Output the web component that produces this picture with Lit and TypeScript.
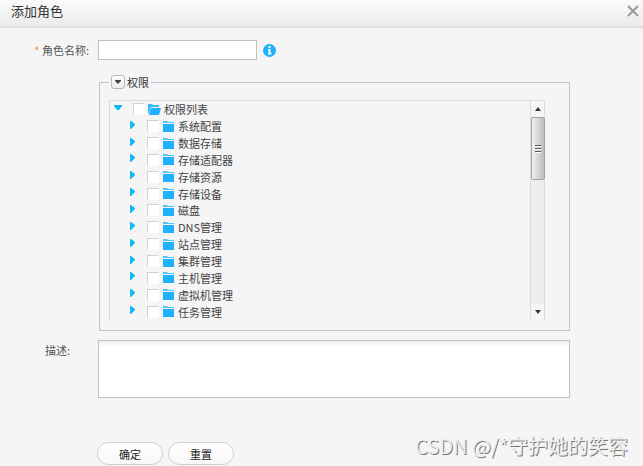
import { LitElement, html, css, svg } from "lit";
import { customElement, state } from "lit/decorators.js";

const PERMISSIONS = [
  "系统配置",
  "数据存储",
  "存储适配器",
  "存储资源",
  "存储设备",
  "磁盘",
  "DNS管理",
  "站点管理",
  "集群管理",
  "主机管理",
  "虚拟机管理",
  "任务管理",
];

const closedFolder = svg`<path d="M0 0h4l1 1h6v1H0z" fill="#4fc4fb"/><path d="M0 3h11v8H0z" fill="#1fb1fb"/>`;
const openFolder = svg`<path d="M0 0h4l1 1h6v2H3L1 10 0 9z" fill="#35bcfb"/><path d="M3 4h10l-2 7H1z" fill="#1fb1fb"/>`;

@customElement("app-root")
export class AppRoot extends LitElement {
  @state() private expanded = true;
  @state() private shown = true;

  static styles = css`
    :host {
      display: block;
      position: relative;
      min-height: 100vh;
      box-sizing: border-box;
      background: #f5f5f5;
      color: #444;
      font: 11px/16px "Noto Sans CJK SC", sans-serif;
    }
    * {
      box-sizing: border-box;
    }
    button,
    input,
    textarea {
      font: inherit;
      color: inherit;
      margin: 0;
      padding: 0;
    }
    button {
      border: 0;
      background: none;
      cursor: pointer;
    }
    svg {
      display: block;
    }
    header {
      display: flex;
      justify-content: space-between;
      height: 28px;
      padding: 2px 4px 0 11px;
      background: linear-gradient(#fafafa, #ebebeb);
      border-bottom: 2px solid #dedede;
    }
    h1 {
      margin: 0;
      font-size: 13px;
      line-height: 18px;
      font-weight: 400;
      color: #333;
    }
    .close {
      height: 18px;
    }
    form {
      display: grid;
      grid-template-columns: 89px minmax(0, 1fr);
      column-gap: 9px;
      padding: 12px 73px 0 0;
    }
    .label {
      text-align: right;
      color: #555;
      line-height: 20px;
    }
    .star {
      color: #ff7f27;
    }
    .label.desc {
      padding-right: 19px;
    }
    .line {
      display: flex;
      align-items: center;
      gap: 6px;
    }
    .name {
      width: 159px;
      height: 20px;
      padding: 0 4px;
      border: 1px solid #c0c0c6;
      background: #fff;
    }
    fieldset {
      grid-column: 2;
      min-width: 0;
      margin: 14px 0 9px 1px;
      padding: 10px 24px 10px 9px;
      border: 1px solid #c0c0d0;
    }
    legend {
      display: flex;
      align-items: center;
      gap: 2px;
      padding: 0 2px;
      color: #333;
    }
    .fold {
      display: grid;
      place-items: center;
      width: 14px;
      height: 14px;
      border: 1px solid #b8b8b8;
      border-radius: 3px;
      background: linear-gradient(#fff, #ececec);
    }
    .panel {
      display: flex;
      height: 220px;
      border: 1px solid #dcdcdc;
      border-bottom: 0;
    }
    .tree {
      flex: 1;
      display: grid;
      grid-template-rows: repeat(13, 1fr);
      margin: 0;
      padding: 0;
      list-style: none;
      overflow: hidden;
    }
    .row {
      display: flex;
      align-items: center;
      min-height: 0;
      padding-left: 19px;
      line-height: 16px;
    }
    .row.root {
      padding-left: 4px;
    }
    .arrow {
      width: 8px;
      margin: 0 10px 3px 0;
    }
    .row.root .arrow {
      margin-right: 11px;
    }
    .row label {
      display: flex;
      align-items: center;
      gap: 4px;
    }
    .row.root label {
      gap: 3px;
    }
    .check {
      appearance: none;
      width: 12px;
      height: 12px;
      border: 1px solid #fff;
      border-left-color: #d2d2d2;
      border-top-color: #d2d2d2;
      background: #fff;
    }
    .check:checked {
      background: #1fb1fb;
    }
    .scroll {
      display: flex;
      flex-direction: column;
      align-items: center;
      width: 14px;
      background: #eee;
      border-left: 1px solid #dedede;
    }
    .step {
      display: grid;
      place-items: center;
      width: 100%;
      height: 16px;
      background: #f5f5f5;
    }
    .thumb {
      display: grid;
      place-items: center;
      width: 14px;
      height: 63px;
      border: 1px solid #a2a2a2;
      border-radius: 2px;
      background: linear-gradient(90deg, #f2f2f2, #bcbcc0);
    }
    .gap {
      flex: 1;
    }
    textarea {
      display: block;
      width: 100%;
      height: 58px;
      padding: 4px;
      border: 1px solid #c0c0c6;
      background: #fff linear-gradient(#eff0f2, #fff) no-repeat 0 0 / 100% 7px;
      resize: none;
    }
    .actions {
      grid-column: 2;
      display: flex;
      gap: 5px;
      margin: 44px 0 0 -1px;
    }
    .pill {
      width: 66px;
      height: 23px;
      border: 1px solid #d0d0d0;
      border-radius: 12px;
      background: linear-gradient(#fff, #f8f8f8);
      color: #222;
    }
    .mark {
      position: absolute;
      right: 15px;
      bottom: 5px;
      font-size: 20px;
      line-height: 30px;
      font-weight: 400;
      color: #eee;
      text-shadow: 1px 1px 0 #777;
      pointer-events: none;
    }
  `;

  private toggleTree() {
    this.expanded = !this.expanded;
  }

  private togglePanel() {
    this.shown = !this.shown;
  }

  private renderChild(name: string) {
    return html`<li class="row">
      <button type="button" class="arrow" aria-label="展开${name}">
        <svg width="6" height="8"><path d="M1 0h1l4 3v1L2 8H1z" fill="#12b9f2" /></svg>
      </button>
      <label>
        <input class="check" type="checkbox" />
        <svg width="11" height="11">${closedFolder}</svg>
        ${name}
      </label>
    </li>`;
  }

  private renderPanel() {
    return html`<div class="panel">
      <ul class="tree">
        <li class="row root">
          <button type="button" class="arrow" aria-label="折叠" @click=${this.toggleTree}>
            <svg width="8" height="5"><path d="M0 0h8v1L5 5H3L0 1z" fill="#12b9f2" /></svg>
          </button>
          <label>
            <input class="check" type="checkbox" />
            <svg width="13" height="11">${openFolder}</svg>
            权限列表
          </label>
        </li>
        ${this.expanded ? PERMISSIONS.map((name) => this.renderChild(name)) : ""}
      </ul>
      <div class="scroll">
        <button type="button" class="step" aria-label="向上">
          <svg width="6" height="4"><path d="M3 0l3 4H0z" fill="#333" /></svg>
        </button>
        <div class="thumb">
          <svg width="6" height="8">
            <path d="M0 .5h6M0 3.5h6M0 6.5h6" stroke="#555" />
            <path d="M0 1.5h6M0 4.5h6M0 7.5h6" stroke="#fff" />
          </svg>
        </div>
        <div class="gap"></div>
        <button type="button" class="step" aria-label="向下">
          <svg width="6" height="4"><path d="M0 0h6L3 4z" fill="#333" /></svg>
        </button>
      </div>
    </div>`;
  }

  render() {
    return html`
      <header>
        <h1>添加角色</h1>
        <button type="button" class="close" aria-label="关闭">
          <svg width="12" height="12">
            <path d="M1 1l10 10M11 1l-10 10" stroke="#999" stroke-width="2" />
          </svg>
        </button>
      </header>
      <form>
        <label class="label" for="role"><span class="star">*</span> 角色名称:</label>
        <div class="line">
          <input id="role" class="name" type="text" />
          <svg width="13" height="13" viewBox="0 0 13 13">
            <circle cx="6.5" cy="6.5" r="6.5" fill="#1fb1fb" />
            <path d="M5.5 2h2v2h-2zM5 5h2.5v4H8.500v1.500H5V9h.5V6.500H5z" fill="#fff" />
          </svg>
        </div>
        <fieldset>
          <legend>
            <button type="button" class="fold" aria-label="收起" @click=${this.togglePanel}>
              <svg width="6" height="4"><path d="M0 0h6v1L3 4 0 1z" fill="#444" /></svg>
            </button>
            权限
          </legend>
          ${this.shown ? this.renderPanel() : ""}
        </fieldset>
        <label class="label desc" for="desc">描述:</label>
        <textarea id="desc"></textarea>
        <div class="actions">
          <button type="button" class="pill">确定</button>
          <button type="reset" class="pill">重置</button>
        </div>
      </form>
      <div class="mark">CSDN @/*守护她的笑容</div>
    `;
  }
}
